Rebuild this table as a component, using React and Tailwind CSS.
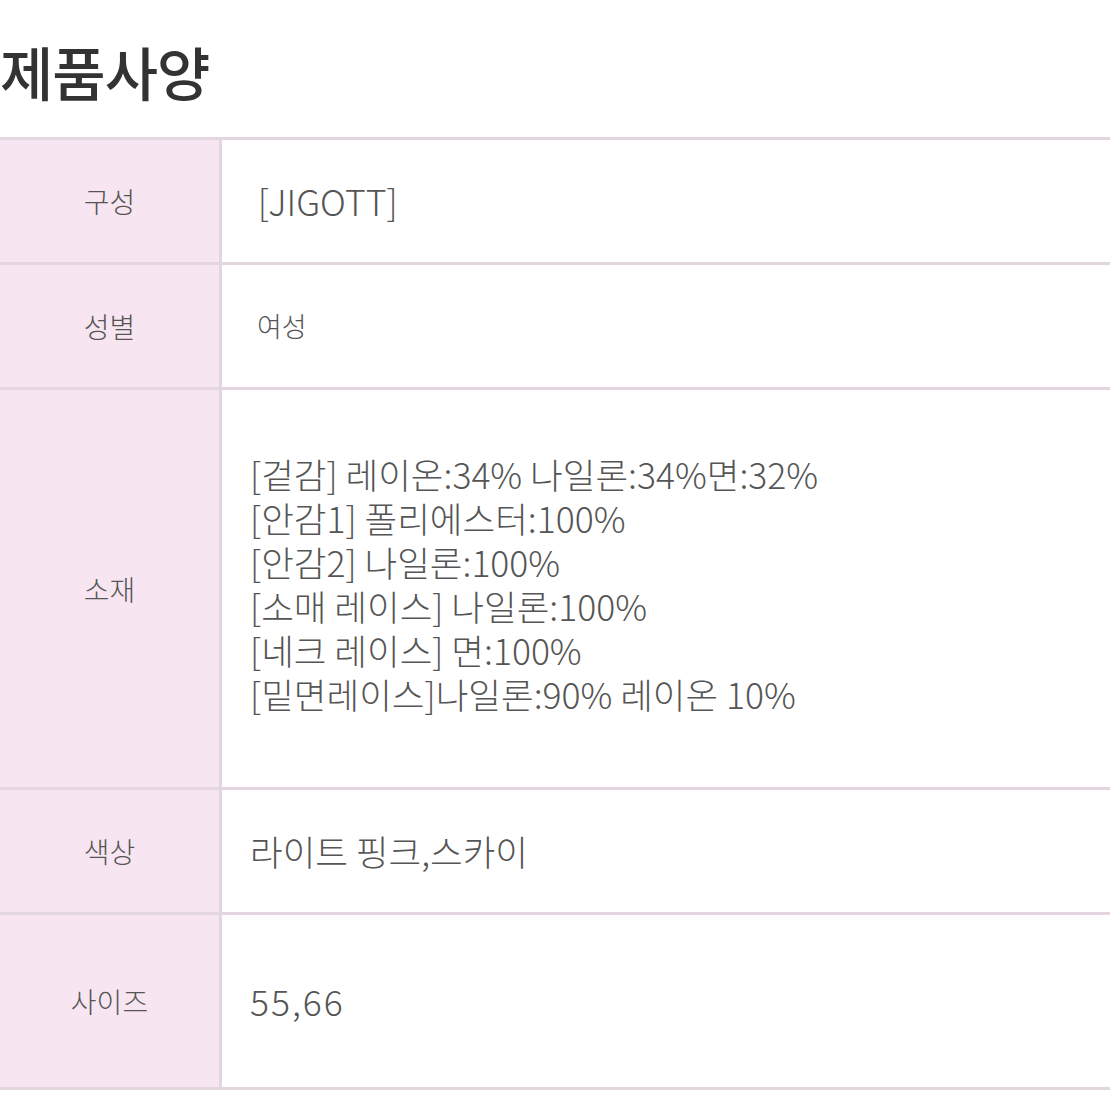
import React from 'react'

const rows = [
    { label: '구성', h: 'h-[125px]', value: ['\u00a0[JIGOTT]'] },
    { label: '성별', h: 'h-[125px]', value: ['여성'], small: true },
    {
        label: '소재',
        h: 'h-[400px]',
        pad: 'pb-[10px]',
        value: [
            '[겉감] 레이온:34% 나일론:34%면:32%',
            '[안감1] 폴리에스터:100%',
            '[안감2] 나일론:100%',
            '[소매 레이스] 나일론:100%',
            '[네크 레이스] 면:100%',
            '[밑면레이스]나일론:90% 레이온 10%',
        ],
    },
    { label: '색상', h: 'h-[125px]', value: ['라이트 핑크,스카이'] },
    { label: '사이즈', h: 'h-[175px]', value: ['55,66'], wide: true },
]

const App = () => {
    return (
        <div
            className="w-[1110px] h-[1110px] bg-white overflow-hidden"
            style={{ fontFamily: '"Noto Sans CJK KR", "Noto Sans", sans-serif' }}
        >
            <h1 className="pt-[42px] h-[137px] text-[58px] leading-none font-medium text-[#333] tracking-[-1px]">
                제품사양
            </h1>

            <div className="border-t-[3px] border-[#e3d6de]">
                {rows.map((row) => (
                    <div key={row.label} className={`flex border-b-[3px] border-[#e3d6de] ${row.h}`}>
                        <div className="w-[222px] shrink-0 flex items-center justify-center bg-[#f7e6f1] border-r-[3px] border-[#e3d6de] text-[28px] font-light text-[#555]">
                            {row.label}
                        </div>
                        <div
                            className={`flex-1 flex flex-col justify-center font-light text-[#555] ${row.pad || ''} ${
                                row.small ? 'pl-[35px] text-[27px]' : 'pl-[28px] text-[35.5px] leading-[44px]'
                            } ${row.wide ? 'tracking-[2px]' : ''}`}
                        >
                            {row.value.map((line) => (
                                <div key={line} className="whitespace-pre">
                                    {line}
                                </div>
                            ))}
                        </div>
                    </div>
                ))}
            </div>
        </div>
    )
}

export default App
